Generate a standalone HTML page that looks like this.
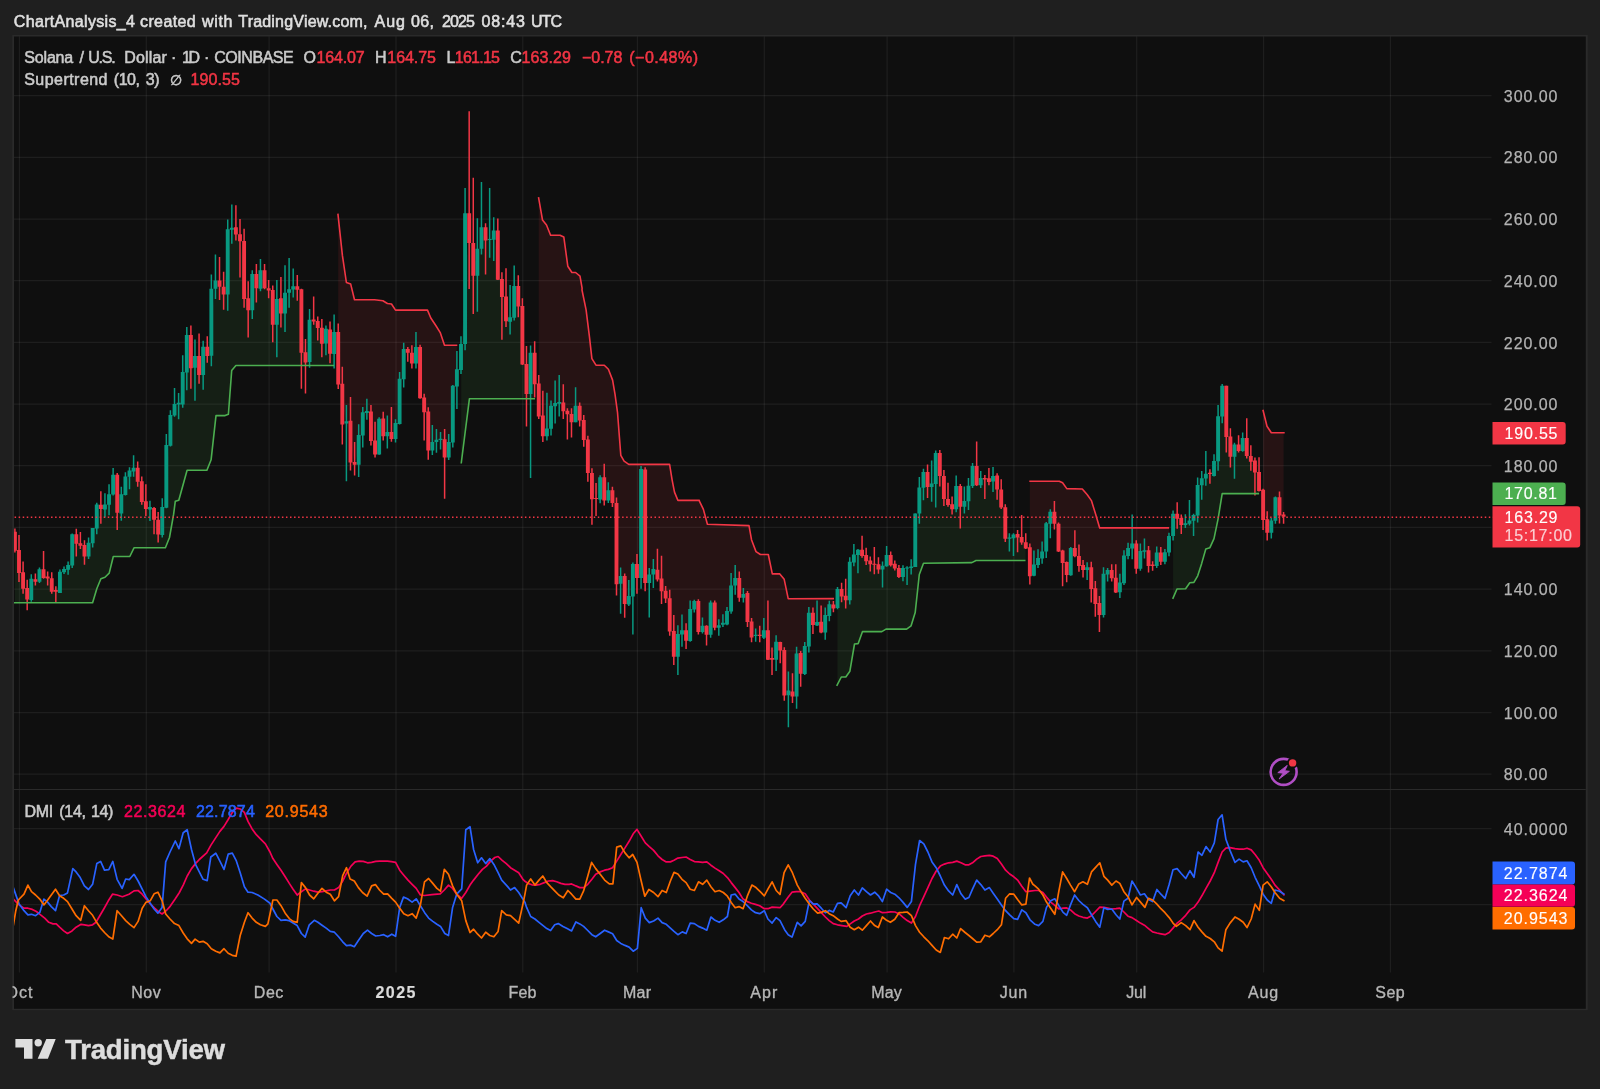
<!DOCTYPE html>
<html lang="en"><head><meta charset="utf-8"><title>SOLUSD chart</title>
<style>html,body{margin:0;padding:0;background:#1f1f1f;}body{width:1600px;height:1089px;overflow:hidden}svg{display:block}</style></head>
<body>
<svg width="1600" height="1089" viewBox="0 0 1600 1089" font-family='"Liberation Sans", sans-serif' font-size="16">
<defs><clipPath id="cp"><rect x="14" y="36.5" width="1477.5" height="936.0"/></clipPath><clipPath id="cpp"><rect x="14" y="36.5" width="1477.5" height="753.0"/></clipPath><clipPath id="cpd"><rect x="14" y="789.5" width="1477.5" height="183.0"/></clipPath><clipPath id="cpt"><rect x="12.6" y="972.5" width="1573.2" height="36.299999999999955"/></clipPath></defs>
<rect width="1600" height="1089" fill="#1f1f1f"/>
<rect x="12.3" y="35.0" width="1575.3999999999999" height="975.1999999999999" fill="#2a2a2a"/>
<rect x="14" y="36.5" width="1571.8" height="972.3" fill="#0f0f0f"/>
<path d="M19.4 36.5V972.5 M146.3 36.5V972.5 M269.1 36.5V972.5 M396.0 36.5V972.5 M522.8 36.5V972.5 M637.4 36.5V972.5 M764.3 36.5V972.5 M887.1 36.5V972.5 M1013.9 36.5V972.5 M1136.7 36.5V972.5 M1263.6 36.5V972.5 M1390.4 36.5V972.5" stroke="rgba(242,242,242,0.068)" stroke-width="1.25" fill="none"/>
<path d="M14 774.1H1491.5 M14 712.5H1491.5 M14 650.8H1491.5 M14 589.1H1491.5 M14 527.4H1491.5 M14 465.7H1491.5 M14 404.0H1491.5 M14 342.3H1491.5 M14 280.7H1491.5 M14 219.0H1491.5 M14 157.3H1491.5 M14 95.6H1491.5 M14 828.5H1491.5 M14 904.7H1491.5" stroke="rgba(242,242,242,0.068)" stroke-width="1.25" fill="none"/>
<path d="M14 789.5H1585.8" stroke="#2a2a2a" stroke-width="1.2" fill="none"/>
<g clip-path="url(#cpp)">
<polygon points="14.9,602.8 92.6,602.8 96.8,588.8 100.9,578.8 105.0,577.2 109.2,573.1 113.3,556.5 129.8,556.5 134.0,547.8 165.4,547.8 169.5,537.5 173.6,514.4 175.3,501.2 178.8,500.2 187.1,470.2 206.9,470.2 211.1,459.8 216.0,415.6 225.1,415.6 228.4,414.3 231.7,370.5 235.9,365.5 333.4,365.5 334.1,365.5 334.1,343.1 330.0,341.6 325.9,336.1 321.8,335.7 317.8,324.6 313.7,320.4 309.6,340.9 305.5,357.4 301.4,321.0 297.3,287.9 293.2,287.9 289.1,291.0 285.0,303.2 280.9,306.0 276.8,311.9 272.7,307.4 268.6,289.4 264.6,279.2 260.5,279.4 256.4,281.1 252.3,292.1 248.2,304.3 244.1,270.0 240.0,237.8 235.9,230.9 231.8,228.7 227.7,262.0 223.6,290.6 219.5,283.5 215.4,284.5 211.3,322.2 207.3,351.5 203.2,360.9 199.1,365.6 195.0,361.9 190.9,351.6 186.8,353.9 182.7,388.2 178.6,403.5 174.5,409.8 170.4,430.4 166.3,476.3 162.2,521.0 158.1,527.1 154.1,513.9 150.0,508.1 145.9,505.1 141.8,491.6 137.7,474.8 133.6,469.6 129.5,473.6 125.4,485.6 121.3,503.9 117.2,493.7 113.1,484.6 109.0,499.5 104.9,506.9 100.9,507.0 96.8,516.5 92.7,535.7 88.6,549.6 84.5,550.8 80.4,544.5 76.3,539.0 72.2,549.9 68.1,567.5 64.0,570.5 59.9,582.3 55.8,590.9 51.7,585.0 47.6,577.5 43.6,573.6 39.5,575.5 35.4,580.5 31.3,589.4 27.2,593.7 23.1,580.5 19.0,561.5 14.9,541.2" fill="rgba(76,175,80,0.10)"/>
<polygon points="338.2,216.6 342.4,255.4 346.4,282.5 350.7,284.1 354.5,299.8 374.6,299.8 382.9,300.7 387.4,303.5 391.5,304.0 395.5,310.1 427.5,310.1 430.8,318.0 435.8,325.5 440.4,332.9 444.5,345.3 456.9,345.3 456.9,378.0 452.8,414.2 448.7,449.9 444.6,448.4 440.5,439.5 436.4,440.9 432.3,446.2 428.2,431.0 424.2,404.8 420.1,372.5 416.0,355.2 411.9,358.1 407.8,350.9 403.7,364.1 399.6,401.4 395.5,431.0 391.4,435.5 387.3,434.1 383.2,427.4 379.1,436.6 375.0,447.4 371.0,426.2 366.9,412.1 362.8,423.9 358.7,449.9 354.6,463.4 350.5,441.6 346.4,422.4 342.3,404.1 338.2,358.2" fill="rgba(242,54,69,0.10)"/>
<polygon points="461.2,463.5 469.4,398.8 534.7,398.8 534.7,368.5 530.6,373.5 526.5,379.0 522.4,335.2 518.3,296.2 514.2,301.9 510.1,319.4 506.0,308.9 501.9,287.9 497.8,255.1 493.7,235.1 489.6,239.6 485.5,233.9 481.5,238.0 477.4,262.2 473.3,259.4 469.2,228.1 465.1,278.6 461.2,357.1" fill="rgba(76,175,80,0.10)"/>
<polygon points="538.7,198.6 542.5,220.0 546.5,225.0 550.6,235.2 560.0,235.2 563.8,236.9 567.8,266.2 571.9,272.5 575.6,272.5 580.0,276.2 582.1,288.1 582.0,290.0 586.1,309.8 589.4,336.3 591.9,358.6 596.0,365.2 604.3,365.2 608.4,369.3 612.6,380.1 615.0,394.1 617.5,412.3 620.8,455.3 624.1,461.1 628.8,464.4 669.6,464.4 672.1,479.8 674.5,492.1 677.9,500.4 699.3,500.4 699.4,501.2 703.4,509.4 707.4,524.3 749.0,525.6 751.5,539.7 756.0,551.6 760.4,554.5 768.3,554.5 772.3,573.9 779.8,573.9 784.2,579.3 788.2,598.7 833.4,598.6 833.4,606.5 829.3,610.1 825.2,623.7 821.1,627.0 817.0,623.7 812.9,619.0 808.9,629.7 804.8,660.0 800.7,663.4 796.6,674.9 792.5,693.9 788.4,692.9 784.3,672.8 780.2,646.4 776.1,650.8 772.0,658.8 767.9,645.0 763.8,634.0 759.7,635.4 755.7,635.4 751.6,629.5 747.5,607.5 743.4,595.8 739.3,587.8 735.2,581.8 731.1,598.6 727.0,617.7 722.9,623.8 718.8,626.5 714.7,615.2 710.6,618.7 706.5,630.2 702.4,628.8 698.4,616.5 694.3,605.3 690.2,625.0 686.1,635.5 682.0,632.3 677.9,645.4 673.8,643.9 669.7,614.8 665.6,594.6 661.5,584.9 657.4,574.7 653.3,571.8 649.2,578.8 645.2,526.3 641.1,523.5 637.0,571.0 632.9,580.2 628.8,600.2 624.7,589.9 620.6,579.8 616.5,543.5 612.4,496.5 608.3,495.3 604.2,488.9 600.1,488.5 596.0,498.5 592.0,486.2 587.9,456.4 583.8,430.1 579.7,413.1 575.6,413.9 571.5,418.1 567.4,412.5 563.3,406.8 559.2,402.9 555.1,404.5 551.0,417.2 546.9,432.4 542.8,426.0 538.7,399.9" fill="rgba(242,54,69,0.10)"/>
<polygon points="837.5,684.3 841.3,677.0 845.8,677.0 849.9,671.2 854.5,644.0 858.2,643.6 862.5,631.6 881.8,631.6 886.0,629.1 906.6,629.1 911.1,625.8 915.2,612.6 919.3,574.5 923.5,563.3 971.9,562.6 976.0,560.5 1025.5,560.5 1025.5,545.5 1021.7,539.8 1017.6,535.7 1013.5,536.3 1009.4,538.0 1005.3,523.0 1001.2,498.5 997.1,482.4 993.0,478.7 988.9,480.1 984.8,478.7 980.7,481.6 976.6,475.6 972.6,476.1 968.5,493.6 964.4,503.9 960.3,496.5 956.2,497.7 952.1,506.8 948.0,502.1 943.9,487.4 939.8,464.5 935.7,468.6 931.6,485.2 927.5,479.5 923.4,480.0 919.4,500.4 915.3,540.2 911.2,567.3 907.1,568.0 903.0,572.5 898.9,572.5 894.8,566.2 890.7,560.1 886.6,560.6 882.5,567.7 878.4,567.0 874.3,564.2 870.2,562.4 866.1,558.1 862.1,552.9 858.0,552.4 853.9,558.5 849.8,581.0 845.7,598.0 841.6,592.8 837.5,598.5" fill="rgba(76,175,80,0.10)"/>
<polygon points="1029.8,481.2 1059.3,481.2 1062.6,482.8 1066.8,488.6 1082.3,489.0 1087.3,494.8 1091.4,500.6 1095.5,513.8 1099.7,527.9 1169.0,527.9 1169.0,544.3 1164.9,557.0 1160.8,557.2 1156.7,559.2 1152.6,565.2 1148.5,558.0 1144.4,551.0 1140.3,559.9 1136.3,556.2 1132.2,546.0 1128.1,552.0 1124.0,569.4 1119.9,587.3 1115.8,585.2 1111.7,574.1 1107.6,572.2 1103.5,594.5 1099.4,609.1 1095.3,596.0 1091.2,578.1 1087.1,568.6 1083.0,567.5 1079.0,561.0 1074.9,552.1 1070.8,561.6 1066.7,568.5 1062.6,556.8 1058.5,537.6 1054.4,517.8 1050.3,517.8 1046.2,537.3 1042.1,555.0 1038.0,561.5 1033.9,570.2 1029.8,561.8" fill="rgba(242,54,69,0.10)"/>
<polygon points="1173.1,598.0 1177.0,589.0 1185.6,588.7 1189.8,582.7 1193.9,582.4 1197.7,575.8 1201.7,563.4 1205.8,549.0 1209.9,547.7 1214.0,538.6 1218.1,518.8 1222.2,493.6 1259.0,493.6 1259.0,481.5 1254.9,466.6 1250.8,458.9 1246.8,447.1 1242.7,444.6 1238.6,447.7 1234.5,450.6 1230.4,446.6 1226.3,411.3 1222.2,401.1 1218.1,438.8 1214.0,468.5 1209.9,473.4 1205.8,476.1 1201.7,481.8 1197.6,500.2 1193.5,517.9 1189.5,522.0 1185.4,524.1 1181.3,521.5 1177.2,516.3 1173.1,525.0" fill="rgba(76,175,80,0.10)"/>
<polygon points="1263.1,410.6 1267.0,426.2 1271.3,432.8 1283.6,432.8 1283.6,515.7 1279.5,506.4 1275.4,509.0 1271.3,526.6 1267.2,526.0 1263.1,505.0" fill="rgba(242,54,69,0.10)"/>
<path d="M31.28 574.2V601.7M39.46 567.6V583.0M59.93 569.4V592.9M64.02 566.4V573.9M68.11 561.5V574.7M72.20 533.4V568.1M88.57 537.5V559.0M92.67 528.1V547.4M96.76 502.8V534.2M104.94 493.2V517.4M109.04 484.3V515.2M113.13 468.1V495.4M121.31 486.8V520.7M125.41 472.2V495.4M129.50 467.3V489.3M133.59 455.2V476.7M149.96 500.8V521.0M162.24 498.2V537.5M166.33 434.1V508.2M170.42 410.2V446.5M174.52 387.9V416.8M178.61 393.1V419.3M182.70 355.2V407.7M186.79 326.9V390.3M194.98 339.6V400.7M203.16 340.7V389.8M211.35 274.6V366.2M215.44 254.5V299.1M227.72 219.4V310.7M231.81 204.5V243.7M252.27 270.2V318.9M260.46 259.1V291.2M276.83 280.1V357.3M285.01 265.2V331.9M289.11 258.1V307.7M293.20 268.5V297.4M309.57 309.0V367.7M325.94 325.5V355.3M334.12 314.4V368.6M346.40 405.1V481.2M358.68 424.2V476.9M362.77 406.9V447.4M366.86 398.7V419.7M379.14 417.2V454.8M387.33 415.5V448.6M395.51 419.2V442.6M399.60 372.1V424.5M403.70 342.8V387.4M415.97 332.1V368.4M432.34 425.1V455.1M436.44 428.9V452.8M440.53 432.0V449.4M448.71 434.1V460.0M452.81 385.0V447.4M456.90 351.1V408.9M460.99 336.2V373.9M465.08 188.1V350.2M477.36 218.2V311.7M481.45 182.1V254.5M489.64 188.1V257.7M493.73 217.2V261.1M510.10 285.0V334.5M514.19 265.5V320.5M530.56 345.4V478.1M546.93 392.8V440.4M551.02 400.4V435.5M555.12 380.4V423.6M559.21 375.1V416.4M575.58 387.2V422.2M600.13 475.3V503.2M608.32 482.2V502.9M620.60 567.5V613.7M628.78 580.0V606.0M632.88 562.4V634.4M641.06 465.9V588.7M649.25 568.0V617.4M653.34 559.1V588.0M677.89 625.3V674.9M681.99 614.5V646.8M690.17 600.5V641.8M694.26 599.7V612.6M702.45 617.5V633.6M710.63 600.5V637.7M718.82 619.2V635.7M722.91 614.2V626.9M727.00 607.1V625.3M731.10 572.9V613.7M735.19 565.0V594.7M743.37 588.1V602.6M755.65 628.6V641.8M763.84 617.9V639.0M776.11 635.2V671.1M788.39 671.6V727.3M796.58 646.8V708.8M804.76 641.9V675.1M808.85 607.0V652.4M817.04 600.6V626.0M825.22 607.6V639.8M829.32 600.7V621.2M837.50 586.9V609.3M849.78 557.2V604.6M853.87 544.0V566.3M857.96 548.9V573.2M882.52 561.5V587.6M886.61 546.0V566.7M902.98 565.3V581.2M907.07 566.3V584.9M911.17 559.2V574.5M915.26 513.4V567.0M919.35 477.0V523.7M923.44 468.8V500.2M931.63 460.5V501.8M935.72 450.6V507.6M956.18 475.4V512.2M964.37 486.4V513.4M968.46 477.9V510.1M972.55 463.0V488.1M980.74 470.9V488.1M993.02 467.1V491.9M1009.39 533.2V551.4M1013.48 533.2V555.9M1033.94 550.6V576.2M1038.03 549.3V567.9M1042.12 541.5V563.8M1046.22 522.1V558.0M1050.31 509.3V538.2M1070.77 546.9V575.8M1087.14 562.2V579.9M1103.51 567.2V617.4M1107.61 567.9V581.6M1119.88 573.8V598.1M1123.98 550.2V584.9M1128.07 542.7V559.3M1132.16 514.6V559.3M1140.35 543.6V570.8M1144.44 538.6V558.4M1156.72 546.4V567.9M1164.90 549.0V564.2M1168.99 532.8V556.3M1173.09 510.5V540.5M1185.36 514.2V527.9M1189.46 500.0V525.4M1193.55 513.8V536.1M1197.64 477.4V522.5M1201.73 471.0V499.8M1205.83 451.0V485.7M1214.01 454.3V476.6M1218.10 405.0V470.8M1222.20 384.0V423.2M1234.47 442.7V478.7M1242.66 432.5V451.8M1271.31 517.9V538.6M1275.40 496.4V523.7" stroke="#089981" stroke-width="1.5" fill="none"/>
<path d="M29.33 578.8h3.9V600.0h-3.9zM37.51 569.3h3.9V581.8h-3.9zM57.98 571.7h3.9V592.9h-3.9zM62.07 568.9h3.9V572.2h-3.9zM66.16 565.1h3.9V569.8h-3.9zM70.25 534.2h3.9V565.6h-3.9zM86.62 542.8h3.9V556.5h-3.9zM90.72 528.1h3.9V543.3h-3.9zM94.81 504.5h3.9V528.4h-3.9zM102.99 504.5h3.9V509.4h-3.9zM107.09 494.2h3.9V504.8h-3.9zM111.18 474.7h3.9V494.5h-3.9zM119.36 494.2h3.9V513.6h-3.9zM123.45 476.4h3.9V494.9h-3.9zM127.55 470.6h3.9V476.7h-3.9zM131.64 467.8h3.9V471.4h-3.9zM148.01 506.9h3.9V509.4h-3.9zM160.29 506.9h3.9V535.0h-3.9zM164.38 444.9h3.9V507.7h-3.9zM168.47 415.1h3.9V445.7h-3.9zM172.57 404.0h3.9V415.6h-3.9zM176.66 402.7h3.9V404.4h-3.9zM180.75 372.1h3.9V404.4h-3.9zM184.84 335.1h3.9V372.6h-3.9zM193.03 356.1h3.9V367.7h-3.9zM201.21 346.8h3.9V375.0h-3.9zM209.40 288.7h3.9V355.7h-3.9zM213.49 280.4h3.9V288.7h-3.9zM225.77 229.3h3.9V294.6h-3.9zM229.86 227.7h3.9V229.7h-3.9zM250.32 274.0h3.9V310.3h-3.9zM258.51 270.2h3.9V288.7h-3.9zM274.88 299.1h3.9V324.7h-3.9zM283.06 292.8h3.9V313.6h-3.9zM287.16 289.2h3.9V292.8h-3.9zM291.25 286.2h3.9V289.5h-3.9zM307.62 319.8h3.9V361.9h-3.9zM323.99 328.8h3.9V343.4h-3.9zM332.17 332.1h3.9V354.0h-3.9zM344.45 421.2h3.9V423.5h-3.9zM356.73 435.0h3.9V464.8h-3.9zM360.82 412.2h3.9V435.5h-3.9zM364.91 411.1h3.9V413.1h-3.9zM377.19 418.8h3.9V454.4h-3.9zM385.38 432.1h3.9V436.2h-3.9zM393.56 423.1h3.9V438.9h-3.9zM397.65 378.8h3.9V424.0h-3.9zM401.75 349.1h3.9V379.2h-3.9zM414.02 346.9h3.9V363.5h-3.9zM430.39 441.9h3.9V450.6h-3.9zM434.49 439.8h3.9V441.9h-3.9zM438.58 438.8h3.9V440.1h-3.9zM446.76 442.1h3.9V457.6h-3.9zM450.86 385.8h3.9V442.6h-3.9zM454.95 369.3h3.9V386.6h-3.9zM459.04 344.1h3.9V370.1h-3.9zM463.13 213.2h3.9V344.1h-3.9zM475.41 248.7h3.9V275.7h-3.9zM479.50 227.3h3.9V248.7h-3.9zM487.69 239.0h3.9V240.1h-3.9zM491.78 230.4h3.9V239.7h-3.9zM508.15 317.2h3.9V321.7h-3.9zM512.24 286.0h3.9V317.7h-3.9zM528.61 352.8h3.9V394.1h-3.9zM544.98 428.5h3.9V436.3h-3.9zM549.07 405.7h3.9V428.8h-3.9zM553.17 402.9h3.9V406.2h-3.9zM557.26 402.1h3.9V403.7h-3.9zM573.63 405.7h3.9V422.2h-3.9zM598.18 477.3h3.9V499.6h-3.9zM606.37 490.2h3.9V500.4h-3.9zM618.65 575.9h3.9V583.7h-3.9zM626.83 596.0h3.9V604.5h-3.9zM630.92 564.0h3.9V596.5h-3.9zM639.11 469.0h3.9V578.0h-3.9zM647.29 574.6h3.9V583.0h-3.9zM651.39 569.0h3.9V574.6h-3.9zM675.94 634.0h3.9V656.7h-3.9zM680.03 630.2h3.9V634.4h-3.9zM688.22 609.1h3.9V641.0h-3.9zM692.31 601.0h3.9V609.6h-3.9zM700.50 625.8h3.9V631.9h-3.9zM708.68 602.6h3.9V634.7h-3.9zM716.87 625.3h3.9V627.8h-3.9zM720.96 622.8h3.9V624.8h-3.9zM725.05 610.9h3.9V624.5h-3.9zM729.14 585.6h3.9V611.6h-3.9zM733.24 577.9h3.9V585.6h-3.9zM741.42 593.9h3.9V597.7h-3.9zM753.70 634.7h3.9V636.0h-3.9zM761.88 630.2h3.9V637.7h-3.9zM774.16 641.8h3.9V659.7h-3.9zM786.44 690.6h3.9V695.2h-3.9zM794.62 653.4h3.9V696.4h-3.9zM802.81 646.0h3.9V674.0h-3.9zM806.90 612.8h3.9V646.6h-3.9zM815.09 621.9h3.9V625.5h-3.9zM823.27 615.0h3.9V632.4h-3.9zM827.37 604.3h3.9V615.9h-3.9zM835.55 589.1h3.9V607.9h-3.9zM847.83 561.7h3.9V600.2h-3.9zM851.92 554.4h3.9V562.6h-3.9zM856.01 549.8h3.9V555.0h-3.9zM880.57 565.8h3.9V569.6h-3.9zM884.66 555.0h3.9V566.3h-3.9zM901.03 568.1h3.9V577.0h-3.9zM905.12 567.4h3.9V568.6h-3.9zM909.22 566.5h3.9V568.1h-3.9zM913.31 513.4h3.9V567.0h-3.9zM917.40 487.4h3.9V513.4h-3.9zM921.49 472.1h3.9V487.8h-3.9zM929.68 483.6h3.9V486.9h-3.9zM933.77 453.1h3.9V484.1h-3.9zM954.23 486.1h3.9V509.3h-3.9zM962.42 501.0h3.9V506.8h-3.9zM966.51 485.8h3.9V501.3h-3.9zM970.60 466.0h3.9V486.1h-3.9zM978.79 477.9h3.9V485.3h-3.9zM991.07 475.9h3.9V481.5h-3.9zM1007.44 537.4h3.9V538.7h-3.9zM1011.53 534.4h3.9V538.2h-3.9zM1031.99 564.6h3.9V575.7h-3.9zM1036.08 558.0h3.9V565.1h-3.9zM1040.17 551.4h3.9V558.5h-3.9zM1044.27 523.3h3.9V551.4h-3.9zM1048.36 511.7h3.9V523.8h-3.9zM1068.82 548.0h3.9V575.2h-3.9zM1085.19 567.2h3.9V570.0h-3.9zM1101.56 573.8h3.9V615.1h-3.9zM1105.65 570.0h3.9V574.5h-3.9zM1117.93 582.4h3.9V592.3h-3.9zM1122.03 555.6h3.9V583.2h-3.9zM1126.12 548.0h3.9V556.0h-3.9zM1130.21 543.6h3.9V548.5h-3.9zM1138.39 551.0h3.9V568.8h-3.9zM1142.49 550.2h3.9V551.8h-3.9zM1154.77 552.6h3.9V565.9h-3.9zM1162.95 552.3h3.9V561.7h-3.9zM1167.04 536.0h3.9V552.6h-3.9zM1171.13 513.8h3.9V536.1h-3.9zM1183.41 523.3h3.9V525.0h-3.9zM1187.51 520.4h3.9V523.7h-3.9zM1191.60 515.0h3.9V520.8h-3.9zM1195.69 484.9h3.9V515.5h-3.9zM1199.78 478.3h3.9V485.2h-3.9zM1203.88 473.7h3.9V478.6h-3.9zM1212.06 460.9h3.9V476.1h-3.9zM1216.15 416.3h3.9V461.2h-3.9zM1220.25 385.7h3.9V416.6h-3.9zM1232.52 444.4h3.9V456.8h-3.9zM1240.71 438.1h3.9V451.0h-3.9zM1269.36 520.4h3.9V532.8h-3.9zM1273.45 497.3h3.9V520.7h-3.9z" fill="#089981"/>
<path d="M14.91 528.4V552.4M19.00 535.0V582.1M23.09 561.5V593.7M27.19 579.7V610.2M35.37 573.6V585.5M43.55 551.1V578.8M47.65 571.4V585.5M51.74 572.2V593.7M55.83 586.3V602.8M76.30 528.8V556.5M80.39 532.1V549.1M84.48 540.3V564.8M100.85 491.2V523.8M117.22 473.1V530.1M137.68 461.5V486.8M141.78 476.4V504.8M145.87 484.3V516.0M154.05 506.9V534.2M158.15 511.9V542.5M190.89 325.5V388.7M199.07 333.5V383.7M207.26 336.3V362.7M219.53 256.9V299.9M223.62 271.8V309.8M235.90 205.2V240.4M240.00 218.9V277.6M244.09 228.8V307.7M248.18 281.2V337.5M256.37 264.0V302.4M264.55 264.0V289.2M268.64 280.1V298.3M272.74 285.5V342.2M280.92 277.1V327.5M297.29 275.1V300.7M301.38 288.7V388.7M305.48 339.0V393.6M313.66 296.6V324.7M317.75 316.4V340.4M321.85 318.9V357.3M330.03 321.4V363.3M338.22 323.5V389.1M342.31 366.8V444.4M350.49 397.0V470.6M354.59 441.9V475.6M370.96 405.1V445.5M375.05 421.8V457.6M383.23 411.7V440.5M391.42 406.9V441.8M407.79 346.9V361.8M411.88 345.3V368.4M420.06 344.8V398.7M424.16 393.7V440.5M428.25 407.3V459.8M444.62 428.9V498.8M469.18 111.2V289.0M473.27 177.7V313.9M485.55 223.2V274.4M497.82 218.6V280.1M501.92 272.3V339.8M506.01 268.3V327.1M518.29 275.2V317.2M522.38 298.2V365.1M526.47 346.1V426.4M534.66 341.2V397.4M538.75 375.1V418.9M542.84 390.8V442.1M563.30 384.2V418.9M567.39 408.2V439.6M571.49 408.2V437.6M579.67 402.4V426.4M583.76 415.1V446.7M587.86 435.8V481.7M591.95 468.2V524.7M596.04 483.1V516.1M604.23 463.8V505.4M612.41 486.7V507.0M616.50 497.6V595.5M624.69 573.6V617.8M636.97 554.1V593.7M645.15 467.3V591.3M657.43 548.8V581.5M661.52 555.8V604.1M665.62 586.0V603.1M669.71 589.8V635.7M673.80 614.9V665.0M686.08 623.3V648.9M698.36 599.3V634.4M706.54 625.3V645.6M714.73 600.5V630.2M739.28 571.6V601.7M747.47 591.1V626.9M751.56 617.9V642.3M759.74 625.8V642.3M767.93 600.5V660.0M772.02 647.6V674.9M780.21 641.8V663.3M784.30 647.3V700.8M792.48 673.2V703.0M800.67 650.9V686.8M812.95 607.5V634.0M821.13 605.6V633.2M833.41 601.0V612.2M841.59 582.8V602.3M845.69 578.7V608.4M862.06 535.7V557.7M866.15 547.8V565.0M870.24 556.4V571.6M874.33 546.9V574.2M878.43 557.2V573.7M890.70 551.4V566.5M894.80 560.4V570.4M898.89 565.0V577.9M927.54 464.6V498.0M939.81 450.1V486.4M943.91 469.9V506.0M948.00 482.8V506.8M952.09 496.4V514.5M960.28 484.1V528.5M976.65 441.5V486.1M984.83 474.9V499.0M988.92 467.9V485.3M997.11 473.2V499.7M1001.20 479.2V508.9M1005.29 504.3V542.0M1017.57 529.9V552.2M1021.66 515.0V544.8M1025.76 533.2V548.9M1029.85 543.6V584.5M1054.40 501.0V529.4M1058.50 522.5V551.9M1062.59 549.8V586.3M1066.68 561.5V582.2M1074.87 530.3V557.2M1078.96 544.4V571.7M1083.05 560.1V577.4M1091.24 561.7V602.6M1095.33 581.1V616.8M1099.42 596.0V632.0M1111.70 564.2V581.6M1115.79 564.2V593.1M1136.25 540.2V573.8M1148.53 546.0V572.5M1152.62 561.2V570.8M1160.81 546.9V565.0M1177.18 502.2V528.7M1181.27 514.6V534.0M1209.92 469.2V483.8M1226.29 385.7V452.6M1230.38 428.2V467.5M1238.57 435.3V452.6M1246.75 418.3V458.4M1250.84 445.2V470.8M1254.94 457.6V495.6M1259.03 457.3V491.5M1263.12 488.7V530.0M1267.21 511.3V540.6M1279.49 491.5V523.4M1283.58 512.1V523.7" stroke="#f23645" stroke-width="1.5" fill="none"/>
<path d="M12.96 531.7h3.9V550.7h-3.9zM17.05 549.9h3.9V573.1h-3.9zM21.14 572.2h3.9V588.8h-3.9zM25.24 587.9h3.9V599.5h-3.9zM33.42 579.3h3.9V581.7h-3.9zM41.60 569.3h3.9V578.0h-3.9zM45.70 576.4h3.9V578.5h-3.9zM49.79 578.2h3.9V591.7h-3.9zM53.88 590.1h3.9V591.7h-3.9zM74.34 534.2h3.9V543.8h-3.9zM78.44 543.3h3.9V545.8h-3.9zM82.53 545.0h3.9V556.5h-3.9zM98.90 504.8h3.9V509.1h-3.9zM115.27 474.7h3.9V512.7h-3.9zM135.73 467.8h3.9V481.7h-3.9zM139.83 481.3h3.9V502.0h-3.9zM143.92 501.2h3.9V509.1h-3.9zM152.10 508.1h3.9V519.7h-3.9zM156.20 519.7h3.9V534.5h-3.9zM188.94 335.1h3.9V368.2h-3.9zM197.12 356.1h3.9V375.0h-3.9zM205.31 346.8h3.9V356.1h-3.9zM217.58 280.4h3.9V286.7h-3.9zM221.68 286.7h3.9V294.6h-3.9zM233.95 227.2h3.9V234.6h-3.9zM238.05 234.3h3.9V241.2h-3.9zM242.14 240.9h3.9V299.1h-3.9zM246.23 298.3h3.9V310.3h-3.9zM254.42 274.0h3.9V288.3h-3.9zM262.60 270.2h3.9V288.3h-3.9zM266.69 288.3h3.9V290.5h-3.9zM270.79 290.0h3.9V324.7h-3.9zM278.97 298.3h3.9V313.6h-3.9zM295.34 286.2h3.9V289.7h-3.9zM299.43 289.2h3.9V352.8h-3.9zM303.53 352.3h3.9V362.4h-3.9zM311.71 319.4h3.9V321.4h-3.9zM315.80 321.1h3.9V328.0h-3.9zM319.90 327.7h3.9V343.7h-3.9zM328.08 329.5h3.9V353.7h-3.9zM336.27 332.0h3.9V384.4h-3.9zM340.36 383.8h3.9V424.5h-3.9zM348.54 420.8h3.9V462.5h-3.9zM352.64 461.9h3.9V464.8h-3.9zM369.01 411.4h3.9V441.1h-3.9zM373.10 440.5h3.9V454.4h-3.9zM381.28 418.5h3.9V436.2h-3.9zM389.47 432.1h3.9V438.9h-3.9zM405.84 349.1h3.9V352.7h-3.9zM409.93 352.7h3.9V363.5h-3.9zM418.12 346.9h3.9V398.2h-3.9zM422.21 397.4h3.9V412.2h-3.9zM426.30 411.4h3.9V450.6h-3.9zM442.67 439.2h3.9V457.6h-3.9zM467.23 213.2h3.9V243.1h-3.9zM471.32 243.1h3.9V275.7h-3.9zM483.60 227.3h3.9V240.6h-3.9zM495.87 230.4h3.9V279.8h-3.9zM499.97 278.9h3.9V297.0h-3.9zM504.06 296.5h3.9V321.3h-3.9zM516.34 286.0h3.9V306.5h-3.9zM520.43 305.9h3.9V364.5h-3.9zM524.52 363.9h3.9V394.1h-3.9zM532.71 352.8h3.9V384.2h-3.9zM536.80 383.4h3.9V416.4h-3.9zM540.89 415.6h3.9V436.3h-3.9zM561.35 402.4h3.9V411.2h-3.9zM565.44 410.7h3.9V414.3h-3.9zM569.54 414.0h3.9V422.2h-3.9zM577.72 405.7h3.9V420.6h-3.9zM581.81 420.1h3.9V440.1h-3.9zM585.91 439.6h3.9V473.1h-3.9zM590.00 473.1h3.9V499.3h-3.9zM594.09 497.9h3.9V499.1h-3.9zM602.28 477.3h3.9V500.4h-3.9zM610.46 490.2h3.9V502.9h-3.9zM614.55 502.9h3.9V584.2h-3.9zM622.74 575.9h3.9V603.9h-3.9zM635.02 564.0h3.9V578.0h-3.9zM643.20 469.5h3.9V583.1h-3.9zM655.48 569.8h3.9V579.6h-3.9zM659.57 578.5h3.9V591.3h-3.9zM663.66 590.7h3.9V598.5h-3.9zM667.76 598.3h3.9V631.4h-3.9zM671.85 631.1h3.9V656.7h-3.9zM684.13 630.2h3.9V640.7h-3.9zM696.40 601.0h3.9V631.9h-3.9zM704.59 625.8h3.9V634.7h-3.9zM712.77 602.6h3.9V627.8h-3.9zM737.33 577.9h3.9V597.7h-3.9zM745.51 593.1h3.9V622.0h-3.9zM749.61 621.5h3.9V637.4h-3.9zM757.79 634.7h3.9V636.0h-3.9zM765.98 630.2h3.9V659.7h-3.9zM770.07 657.9h3.9V659.7h-3.9zM778.25 642.1h3.9V650.6h-3.9zM782.35 650.1h3.9V695.5h-3.9zM790.53 691.4h3.9V696.4h-3.9zM798.72 653.1h3.9V673.7h-3.9zM811.00 612.8h3.9V625.1h-3.9zM819.18 621.7h3.9V632.4h-3.9zM831.46 604.6h3.9V608.4h-3.9zM839.64 589.1h3.9V596.4h-3.9zM843.74 595.7h3.9V600.2h-3.9zM860.11 549.8h3.9V556.0h-3.9zM864.20 555.0h3.9V561.3h-3.9zM868.29 560.5h3.9V564.3h-3.9zM872.38 563.7h3.9V564.7h-3.9zM876.48 564.3h3.9V569.6h-3.9zM888.75 555.0h3.9V565.3h-3.9zM892.85 563.8h3.9V568.6h-3.9zM896.94 567.9h3.9V577.0h-3.9zM925.59 472.1h3.9V486.9h-3.9zM937.86 453.1h3.9V475.9h-3.9zM941.96 475.9h3.9V499.0h-3.9zM946.05 499.0h3.9V505.1h-3.9zM950.14 504.3h3.9V509.3h-3.9zM958.33 486.1h3.9V506.8h-3.9zM974.70 466.0h3.9V485.3h-3.9zM982.88 477.9h3.9V479.5h-3.9zM986.97 478.2h3.9V482.0h-3.9zM995.16 475.4h3.9V489.4h-3.9zM999.25 489.4h3.9V507.6h-3.9zM1003.34 507.3h3.9V538.7h-3.9zM1015.62 534.0h3.9V537.4h-3.9zM1019.71 537.0h3.9V542.6h-3.9zM1023.81 542.3h3.9V548.6h-3.9zM1027.90 547.3h3.9V576.2h-3.9zM1052.45 511.7h3.9V523.8h-3.9zM1056.55 523.8h3.9V551.4h-3.9zM1060.64 550.5h3.9V563.0h-3.9zM1064.73 562.0h3.9V575.0h-3.9zM1072.91 548.0h3.9V556.3h-3.9zM1077.01 556.0h3.9V565.9h-3.9zM1081.10 565.0h3.9V570.0h-3.9zM1089.29 567.2h3.9V589.0h-3.9zM1093.38 588.2h3.9V603.9h-3.9zM1097.47 603.1h3.9V615.1h-3.9zM1109.75 570.0h3.9V578.3h-3.9zM1113.84 577.8h3.9V592.6h-3.9zM1134.30 543.6h3.9V568.8h-3.9zM1146.58 550.2h3.9V565.9h-3.9zM1150.67 564.5h3.9V565.9h-3.9zM1158.86 552.6h3.9V561.7h-3.9zM1175.23 513.8h3.9V518.8h-3.9zM1179.32 517.9h3.9V525.0h-3.9zM1207.97 472.8h3.9V473.9h-3.9zM1224.34 385.7h3.9V436.9h-3.9zM1228.43 436.4h3.9V456.8h-3.9zM1236.62 444.4h3.9V451.0h-3.9zM1244.80 438.1h3.9V456.0h-3.9zM1248.89 456.0h3.9V461.7h-3.9zM1252.99 460.6h3.9V472.5h-3.9zM1257.08 472.1h3.9V490.9h-3.9zM1261.17 489.8h3.9V520.1h-3.9zM1265.26 519.3h3.9V532.8h-3.9zM1277.54 497.3h3.9V515.5h-3.9zM1281.63 514.6h3.9V516.8h-3.9z" fill="#f23645"/>
<polyline points="10.5,602.8 92.6,602.8 96.8,588.8 100.9,578.8 105.0,577.2 109.2,573.1 113.3,556.5 129.8,556.5 134.0,547.8 165.4,547.8 169.5,537.5 173.6,514.4 175.3,501.2 178.8,500.2 187.1,470.2 206.9,470.2 211.1,459.8 216.0,415.6 225.1,415.6 228.4,414.3 231.7,370.5 235.9,365.5 333.4,365.5 334.1,365.5" fill="none" stroke="#4caf50" stroke-width="1.6" stroke-linejoin="round"/>
<polyline points="337.9,213.7 342.4,255.4 346.4,282.5 350.7,284.1 354.5,299.8 374.6,299.8 382.9,300.7 387.4,303.5 391.5,304.0 395.5,310.1 427.5,310.1 430.8,318.0 435.8,325.5 440.4,332.9 444.5,345.3 457.3,345.3" fill="none" stroke="#f23645" stroke-width="1.6" stroke-linejoin="round"/>
<polyline points="461.2,463.5 469.4,398.8 535,398.8" fill="none" stroke="#4caf50" stroke-width="1.6" stroke-linejoin="round"/>
<polyline points="538.5,197.2 542.5,220.0 546.5,225.0 550.6,235.2 560.0,235.2 563.8,236.9 567.8,266.2 571.9,272.5 575.6,272.5 580.0,276.2 582.1,288.1 582.0,290.0 586.1,309.8 589.4,336.3 591.9,358.6 596.0,365.2 604.3,365.2 608.4,369.3 612.6,380.1 615.0,394.1 617.5,412.3 620.8,455.3 624.1,461.1 628.8,464.4 669.6,464.4 672.1,479.8 674.5,492.1 677.9,500.4 699.3,500.4 699.4,501.2 703.4,509.4 707.4,524.3 749.0,525.6 751.5,539.7 756.0,551.6 760.4,554.5 768.3,554.5 772.3,573.9 779.8,573.9 784.2,579.3 788.2,598.7 834,598.6" fill="none" stroke="#f23645" stroke-width="1.6" stroke-linejoin="round"/>
<polyline points="836.7,685.8 841.3,677.0 845.8,677.0 849.9,671.2 854.5,644.0 858.2,643.6 862.5,631.6 881.8,631.6 886.0,629.1 906.6,629.1 911.1,625.8 915.2,612.6 919.3,574.5 923.5,563.3 971.9,562.6 976.0,560.5 1025.5,560.5" fill="none" stroke="#4caf50" stroke-width="1.6" stroke-linejoin="round"/>
<polyline points="1029.3,481.2 1059.3,481.2 1062.6,482.8 1066.8,488.6 1082.3,489.0 1087.3,494.8 1091.4,500.6 1095.5,513.8 1099.7,527.9 1169.1,527.9" fill="none" stroke="#f23645" stroke-width="1.6" stroke-linejoin="round"/>
<polyline points="1172.7,598.9 1177.0,589.0 1185.6,588.7 1189.8,582.7 1193.9,582.4 1197.7,575.8 1201.7,563.4 1205.8,549.0 1209.9,547.7 1214.0,538.6 1218.1,518.8 1222.2,493.6 1259.1,493.6" fill="none" stroke="#4caf50" stroke-width="1.6" stroke-linejoin="round"/>
<polyline points="1262.9,409.7 1267.0,426.2 1271.3,432.8 1284.7,432.8" fill="none" stroke="#f23645" stroke-width="1.6" stroke-linejoin="round"/>
</g>
<path d="M14.6 517.2H1493" stroke="#f23645" stroke-width="1.45" stroke-dasharray="1.5 2.55" fill="none"/>
<g clip-path="url(#cpd)">
<polyline points="13.3,899.1 19.1,904.9 24.0,908.2 27.9,908.2 32.3,909.4 36.4,911.5 40.6,914.8 44.7,918.1 48.8,922.3 53.0,923.9 56.3,923.9 59.6,927.2 63.7,930.9 67.5,933.5 72.0,930.9 76.1,927.2 81.1,924.3 84.4,924.8 88.5,925.6 92.6,924.8 96.0,922.3 100.1,915.3 104.2,908.2 108.3,900.8 112.5,894.2 117.1,895.0 122.4,896.7 129.0,894.2 134.0,890.9 138.1,890.5 142.2,894.2 145.9,898.8 150.5,904.1 154.6,908.2 158.8,912.0 162.1,914.0 166.2,910.7 170.3,906.1 175.3,898.8 179.4,892.5 183.2,885.1 187.2,876.0 191.5,868.6 195.5,863.6 199.3,859.5 206.7,852.9 210.8,845.4 215.8,837.6 219.9,831.4 224.0,826.4 228.2,819.5 232.3,812.4 236.4,808.2 240.2,809.0 244.4,812.4 248.0,821.4 252.1,828.9 256.3,834.7 260.4,838.8 265.4,843.8 270.0,852.0 272.9,858.6 276.9,864.4 281.0,870.2 285.2,876.8 289.3,883.4 293.1,889.2 297.2,895.0 301.4,891.7 305.5,888.9 309.6,890.0 313.8,891.2 317.9,892.2 322.0,891.7 326.2,890.9 330.3,890.0 334.4,890.0 338.6,887.6 342.7,881.0 346.8,872.7 351.0,866.1 355.1,861.9 359.2,861.1 363.3,861.4 367.5,862.8 371.6,862.4 375.7,861.4 379.9,861.1 387.3,861.1 391.4,861.6 395.6,862.4 399.7,870.2 403.8,875.2 408.0,880.1 412.1,884.3 416.2,888.4 420.4,895.0 424.5,895.5 431.9,894.7 440.2,893.8 444.3,890.0 448.5,885.1 452.6,888.4 456.7,894.2 461.7,898.3 465.8,892.5 470.0,885.1 473.6,880.1 478.2,874.3 482.4,869.4 486.5,866.1 490.6,861.1 494.8,857.5 498.1,856.5 502.2,860.3 506.3,863.6 510.5,867.7 514.6,870.2 518.7,872.7 522.9,879.3 525.0,881.3 527.9,883.4 531.9,884.8 536.0,885.1 540.2,884.3 544.3,882.6 548.4,881.0 552.6,880.6 556.7,881.8 560.8,883.4 565.0,884.3 569.1,884.3 571.6,883.9 575.9,885.9 579.8,887.6 583.6,887.6 587.8,884.3 591.9,879.3 595.7,874.3 600.2,871.9 604.6,870.2 608.4,869.4 612.6,867.7 616.7,861.1 620.8,854.5 625.0,847.9 629.1,841.3 633.2,833.8 637.0,829.4 641.2,836.3 645.3,842.9 649.3,846.6 653.6,850.4 658.0,855.8 662.1,859.5 666.3,861.9 670.4,861.9 674.0,860.3 677.9,858.1 682.0,857.5 686.1,857.0 690.2,859.5 694.4,861.6 698.5,861.9 702.6,862.4 706.8,861.9 710.9,865.2 715.0,868.1 719.2,870.7 723.3,873.5 727.4,877.6 731.2,882.6 735.2,887.6 739.0,892.5 743.1,899.1 747.3,901.6 751.4,903.3 755.5,904.4 759.7,905.7 764.3,908.7 767.9,908.7 772.1,907.1 776.2,907.4 780.0,907.7 783.3,904.1 787.9,897.5 792.0,892.2 796.2,891.7 800.6,891.7 805.2,893.8 809.4,900.0 813.3,904.1 817.1,908.2 821.3,912.7 825.4,917.0 829.2,920.6 833.2,923.6 837.5,924.8 841.9,925.6 846.9,926.4 850.2,923.9 854.3,921.0 858.5,919.0 862.3,916.0 866.4,914.0 870.5,913.2 874.7,912.0 878.8,911.0 882.4,912.7 886.6,912.4 890.7,911.9 894.8,912.0 899.0,913.7 903.1,917.3 907.2,920.6 911.4,923.1 915.5,916.5 919.6,905.7 923.8,896.7 927.9,887.6 932.0,878.5 936.2,871.0 940.3,866.1 944.4,864.1 948.6,862.8 952.7,862.4 956.8,861.1 961.0,862.8 965.1,864.8 968.9,864.8 972.5,862.8 976.7,859.1 980.8,856.5 984.9,855.8 989.4,855.3 993.2,856.2 997.3,858.6 1001.4,864.1 1005.6,870.2 1009.7,874.0 1013.8,876.8 1017.6,880.1 1021.8,886.2 1025.9,891.7 1030.0,891.2 1035.0,890.5 1038.6,890.5 1042.9,892.5 1046.5,897.1 1050.7,902.1 1054.8,905.4 1058.9,909.0 1063.1,908.2 1066.7,907.9 1070.5,909.9 1074.6,913.7 1078.8,916.0 1082.9,917.3 1087.4,918.1 1091.5,915.7 1095.6,911.5 1099.8,907.1 1103.9,907.4 1107.7,908.2 1111.8,909.0 1116.0,908.7 1119.8,908.2 1123.9,912.0 1128.0,916.2 1132.0,917.6 1136.1,920.3 1140.4,923.1 1144.4,925.2 1148.5,928.6 1152.6,931.9 1156.9,933.0 1160.9,933.8 1165.0,934.7 1169.2,932.5 1173.0,928.1 1177.1,923.1 1181.2,919.8 1185.7,915.3 1190.0,909.9 1194.0,907.4 1198.1,902.1 1201.9,895.8 1206.0,888.4 1210.2,881.0 1214.3,872.7 1218.1,862.4 1222.1,852.0 1225.9,848.2 1230.0,847.6 1235.0,848.7 1239.1,849.2 1243.2,849.2 1247.0,848.2 1251.2,849.9 1255.1,854.5 1259.3,860.3 1263.1,867.7 1267.2,873.5 1271.3,879.3 1275.0,885.1 1279.6,890.0 1284.5,895.5" fill="none" stroke="#f50057" stroke-width="1.7" stroke-linejoin="round"/>
<polyline points="13.3,887.6 19.1,904.1 24.0,910.7 27.9,914.8 31.5,914.3 35.6,915.7 39.8,912.4 43.9,899.1 47.2,901.6 51.3,906.6 55.5,910.7 59.6,895.5 63.7,895.0 67.5,892.9 72.8,868.6 76.1,871.9 80.2,877.6 84.4,885.9 88.5,889.5 92.6,884.3 96.8,863.6 100.6,861.4 104.5,870.2 108.8,869.7 112.8,861.4 117.1,879.3 122.1,888.4 125.7,879.0 129.3,879.6 134.0,874.3 138.1,881.0 142.2,889.2 145.9,896.7 150.2,903.3 154.1,909.0 157.9,913.2 162.1,907.4 165.7,861.9 170.0,852.0 175.3,841.0 178.9,848.7 183.2,832.7 187.2,829.7 191.5,849.5 195.5,864.4 199.3,871.9 203.1,879.3 207.2,880.6 210.8,857.0 215.8,853.2 219.9,861.1 224.0,869.4 228.2,854.2 232.3,853.2 236.1,860.3 240.2,872.7 244.4,886.7 248.0,892.2 252.1,892.5 257.9,895.0 264.5,899.1 270.0,903.3 272.9,909.0 276.9,916.5 281.0,920.3 285.2,919.8 289.0,920.6 293.1,923.1 297.2,925.6 301.4,933.5 305.2,937.1 309.3,924.8 314.3,920.3 317.9,922.3 322.0,925.2 326.2,928.1 330.3,931.4 334.4,932.2 338.6,936.8 342.7,941.8 346.5,945.7 350.6,945.1 354.3,946.7 358.4,940.5 363.3,933.5 367.5,930.2 371.6,933.5 375.7,936.0 379.9,935.5 383.7,934.7 387.6,936.8 391.8,934.2 395.6,936.3 399.7,907.4 403.5,897.1 407.5,898.8 412.1,902.1 416.2,898.8 420.4,905.7 424.5,912.4 428.6,918.1 432.8,921.4 436.9,924.3 440.5,926.4 444.8,933.5 448.5,935.5 452.6,907.4 456.7,894.2 461.7,888.9 465.8,829.7 470.0,826.7 473.6,849.5 477.7,862.8 481.5,857.8 485.7,863.6 489.8,858.6 493.9,864.4 498.1,872.7 501.7,880.1 506.3,885.1 510.5,890.0 514.6,887.6 518.7,892.5 522.9,899.1 525.0,902.4 526.6,907.4 530.7,916.5 534.9,919.0 539.0,922.3 543.1,925.6 546.8,928.6 550.6,930.5 554.7,924.8 558.3,923.6 563.0,926.4 567.1,928.6 571.6,930.9 575.9,921.9 579.8,923.9 583.6,926.4 587.8,930.5 591.9,934.7 595.7,936.8 600.2,933.5 604.6,930.2 608.4,931.9 612.6,933.8 616.7,940.5 620.8,943.4 625.0,945.4 629.1,947.1 633.2,951.2 637.4,948.4 641.2,907.7 645.3,918.1 649.3,922.6 653.6,921.0 658.0,918.1 662.1,922.6 666.3,924.3 670.4,928.1 674.0,931.4 677.9,934.7 682.3,931.9 686.1,933.5 690.2,923.1 694.4,923.6 698.5,926.4 702.6,928.1 706.8,930.2 710.9,917.0 715.0,920.3 719.2,922.3 723.3,919.8 727.4,916.5 731.2,895.0 735.2,894.2 739.0,899.1 743.1,901.6 747.3,905.7 751.4,909.9 755.5,912.7 759.7,913.7 764.3,910.7 767.9,919.0 772.1,923.1 776.2,917.6 780.0,920.6 784.6,929.7 788.2,934.7 792.0,937.1 797.3,922.3 801.1,925.9 805.2,921.4 809.4,900.5 813.3,904.1 817.1,903.8 821.3,908.2 825.4,912.7 829.2,910.4 833.2,912.0 837.5,903.3 841.1,902.8 846.1,907.7 850.2,895.8 854.3,890.0 858.5,895.0 862.3,887.9 866.4,891.7 870.5,895.0 874.7,892.2 878.8,896.2 882.4,901.6 886.6,889.2 890.7,892.5 894.8,894.2 899.0,897.8 903.1,902.4 907.2,907.4 911.4,901.6 915.5,864.4 919.6,840.5 923.8,843.8 927.9,852.0 932.0,861.9 936.2,867.7 940.3,876.0 944.4,885.1 948.6,890.9 952.7,895.0 956.8,884.6 961.0,893.8 965.1,899.1 968.9,897.5 972.5,889.2 976.7,880.1 980.8,884.6 984.9,890.0 989.4,887.6 993.2,893.3 997.3,899.1 1001.4,904.9 1005.6,910.7 1009.7,914.8 1013.8,918.6 1017.6,919.3 1021.8,909.9 1025.9,912.7 1030.0,919.8 1035.0,924.3 1038.6,925.6 1042.9,921.4 1046.5,907.4 1050.7,900.8 1054.8,898.8 1058.9,905.7 1063.1,912.4 1066.7,915.3 1070.5,904.9 1074.6,895.0 1078.8,900.5 1082.9,904.4 1087.4,907.7 1091.5,914.8 1095.6,921.4 1099.8,927.2 1103.9,907.7 1107.7,909.4 1111.8,909.0 1116.0,914.8 1119.8,919.0 1123.9,901.1 1128.0,898.3 1132.0,881.0 1136.1,887.6 1140.4,895.0 1144.4,893.8 1148.5,899.5 1152.6,901.6 1156.9,889.5 1160.9,894.2 1165.0,898.3 1169.2,884.3 1173.0,869.7 1177.1,868.6 1181.2,873.5 1185.7,878.5 1190.0,870.7 1194.0,877.3 1198.1,852.0 1201.9,855.3 1206.0,846.6 1210.2,852.0 1214.3,842.9 1218.1,819.5 1222.1,814.8 1225.9,839.3 1230.0,850.4 1235.0,862.4 1239.1,859.1 1243.2,861.9 1247.0,860.8 1251.2,867.7 1255.1,877.3 1259.3,885.9 1263.1,894.2 1267.2,900.0 1271.3,903.3 1275.0,890.0 1279.6,891.2 1284.5,894.5" fill="none" stroke="#2962ff" stroke-width="1.7" stroke-linejoin="round"/>
<polyline points="13.3,925.6 15.8,910.7 18.3,900.0 24.0,894.2 27.9,885.1 31.5,891.7 35.6,895.0 39.8,899.1 43.9,904.9 47.7,900.0 51.3,895.0 55.5,889.2 59.6,895.8 63.7,898.3 67.5,901.6 72.0,909.0 76.1,915.7 80.7,920.3 84.4,905.7 88.5,910.7 92.6,915.3 96.8,922.6 100.6,928.1 105.0,933.0 109.2,937.1 112.8,939.1 117.1,910.7 121.1,915.3 125.7,920.6 129.8,924.3 134.0,927.6 138.1,921.4 142.2,908.2 145.9,902.4 150.2,900.8 154.1,893.8 157.9,892.2 162.1,900.8 165.7,914.0 170.0,919.0 174.5,923.6 178.9,925.6 183.2,933.0 187.2,938.8 191.5,943.4 195.1,939.1 199.3,942.1 203.1,941.3 207.2,943.8 211.3,948.7 215.8,951.2 219.9,952.9 224.0,948.7 228.2,953.3 232.3,955.3 236.1,956.2 240.2,935.5 244.4,922.3 248.0,912.7 252.1,918.1 256.3,922.3 260.4,924.8 265.4,926.4 267.9,923.9 270.0,914.0 272.9,900.0 276.9,900.0 281.0,905.7 285.2,913.2 289.3,918.6 293.1,921.4 297.2,922.3 301.4,882.6 305.5,887.6 309.6,895.0 313.8,898.8 317.9,893.3 322.0,888.4 326.2,892.2 330.3,894.2 334.4,900.8 338.6,896.7 342.7,875.7 346.5,867.7 350.1,879.0 354.3,881.0 358.4,887.6 362.5,892.5 367.1,896.2 371.6,885.9 375.4,884.6 379.5,890.0 383.7,894.2 387.6,893.8 391.8,898.3 395.6,902.1 399.7,908.2 403.8,913.7 408.0,915.7 412.1,913.7 416.2,918.1 420.4,904.9 424.5,881.8 428.6,878.5 432.8,883.4 436.9,888.4 440.5,891.2 444.3,869.4 448.5,874.3 452.6,885.9 456.7,894.2 461.7,900.8 465.8,920.6 470.0,932.5 473.6,929.2 477.7,934.2 481.5,938.0 485.7,932.2 489.8,935.5 493.9,936.8 498.1,931.4 501.7,910.7 506.3,914.8 510.5,915.7 514.6,919.3 518.7,923.1 522.9,904.1 525.0,893.8 526.6,885.1 530.7,879.0 534.9,885.1 539.0,880.1 542.8,876.0 546.8,882.6 550.6,886.7 554.7,890.9 558.8,895.0 563.3,897.8 567.9,890.5 571.6,894.2 575.9,899.1 579.8,899.1 583.6,890.9 587.8,876.0 591.6,862.4 595.7,868.6 600.2,874.3 604.6,880.1 609.3,883.9 612.9,883.9 616.7,847.1 620.8,845.9 625.0,852.9 629.1,857.8 632.7,854.5 637.0,862.4 641.2,881.0 644.8,896.2 648.9,889.5 653.6,892.5 658.0,896.7 662.1,890.5 666.3,892.5 670.4,881.0 674.0,872.4 677.9,874.0 682.0,879.3 686.1,882.6 690.2,889.2 694.4,890.5 698.5,881.8 702.6,884.3 706.8,880.1 710.9,886.7 715.0,891.7 719.2,890.5 723.3,892.5 727.4,896.2 731.2,902.4 735.2,907.7 739.0,906.6 743.1,908.7 747.3,896.2 751.9,885.1 756.0,887.6 760.2,891.7 764.3,895.8 767.9,889.2 772.1,881.8 776.2,890.5 780.0,894.5 784.1,872.7 788.2,864.8 792.4,872.7 797.3,885.1 801.1,891.7 805.2,898.3 809.4,904.1 813.3,909.0 817.6,913.2 821.3,912.4 825.4,910.7 829.2,913.7 833.2,915.7 837.5,919.0 841.1,921.4 846.1,920.6 850.2,927.2 854.3,929.7 858.5,927.2 862.3,930.2 866.4,925.6 870.5,921.0 874.7,925.6 878.3,927.6 882.4,917.0 886.6,920.3 890.4,922.3 894.8,919.3 899.0,912.7 903.1,912.4 907.2,912.0 911.4,915.7 915.5,925.6 919.6,932.2 923.8,936.8 927.9,940.8 932.0,945.4 936.2,950.0 940.3,952.4 944.4,937.5 948.6,938.8 952.7,934.2 956.8,938.0 960.6,928.6 965.1,932.5 968.9,935.5 972.5,938.5 976.7,942.1 980.8,941.8 984.9,935.2 989.4,936.8 993.2,933.5 997.3,929.7 1001.4,924.8 1003.9,909.0 1005.6,898.3 1009.7,893.8 1013.8,894.2 1017.6,899.5 1021.8,904.9 1025.9,904.1 1029.5,878.0 1032.9,884.3 1035.0,885.9 1038.6,889.2 1042.9,895.0 1046.5,902.1 1050.7,908.2 1054.8,914.3 1058.9,890.9 1062.6,871.9 1066.7,878.5 1070.5,885.1 1074.6,891.7 1078.8,883.9 1082.9,881.8 1087.4,884.3 1091.5,871.9 1095.6,867.4 1099.8,862.8 1103.9,876.3 1107.7,880.1 1111.8,885.1 1116.0,881.0 1119.8,883.4 1123.9,891.7 1128.0,896.7 1132.0,904.9 1136.6,897.5 1140.7,902.4 1144.9,907.4 1148.5,898.3 1152.6,900.0 1156.9,904.1 1160.9,908.7 1165.0,912.7 1169.2,917.6 1173.0,923.1 1176.3,926.4 1181.2,922.6 1185.7,925.6 1190.0,929.7 1194.0,920.6 1198.1,927.2 1201.9,931.9 1206.0,936.3 1210.2,938.5 1214.3,941.8 1218.1,947.9 1222.1,951.2 1225.9,929.7 1230.0,923.1 1235.0,917.0 1239.1,919.3 1243.2,922.3 1247.0,927.6 1251.2,919.0 1255.1,904.1 1259.3,910.4 1263.1,885.1 1267.2,881.8 1271.3,886.7 1275.0,892.5 1279.6,898.3 1284.5,901.1" fill="none" stroke="#ff6d00" stroke-width="1.7" stroke-linejoin="round"/>
</g>
<path d="M1492.5 422H1562.7a3 3 0 0 1 3 3V441.5a3 3 0 0 1 -3 3H1492.5z" fill="#f23645"/>
<path d="M1492.5 482.5H1562.7a3 3 0 0 1 3 3V502.0a3 3 0 0 1 -3 3H1492.5z" fill="#4caf50"/>
<path d="M1492.5 506.2H1577.2a3 3 0 0 1 3 3V544.4a3 3 0 0 1 -3 3H1492.5z" fill="#f23645"/>
<path d="M1492.5 861.5H1572.0a3 3 0 0 1 3 3V881.5a3 3 0 0 1 -3 3H1492.5z" fill="#2962ff"/>
<path d="M1492.5 884.5H1572.0a3 3 0 0 1 3 3V903.8a3 3 0 0 1 -3 3H1492.5z" fill="#f50057"/>
<path d="M1492.5 907H1572.0a3 3 0 0 1 3 3V926.5a3 3 0 0 1 -3 3H1492.5z" fill="#ff6d00"/>
<circle cx="1283.6" cy="771.9" r="13" fill="none" stroke="#b04ec4" stroke-width="2.6"/>
<polygon points="1287.44,765.20 1277.80,772.64 1283.10,773.14 1279.10,779.00 1289.40,771.30 1284.76,770.66" fill="#b04ec4" stroke="#b04ec4" stroke-width="0.9" stroke-linejoin="round"/>
<circle cx="1292.6" cy="762.9" r="5.6" fill="#0f0f0f"/>
<circle cx="1292.6" cy="762.9" r="3.7" fill="#f23645"/>
<path d="M15.4 1039H32.5V1058.8H24V1047.4H15.4z" fill="#dedede"/>
<circle cx="38.2" cy="1042.7" r="3.7" fill="#dedede"/>
<path d="M46.3 1039H55.7L47.9 1058.8H37.7z" fill="#dedede"/>
<g opacity="0.999">
<text x="13.75" y="27.2" fill="#e0e0e0" stroke="#e0e0e0" stroke-width="0.55" text-anchor="start" textLength="121.25" lengthAdjust="spacing">ChartAnalysis_4</text>
<text x="140" y="27.2" fill="#e0e0e0" stroke="#e0e0e0" stroke-width="0.55" text-anchor="start" textLength="55.75" lengthAdjust="spacing">created</text>
<text x="202" y="27.2" fill="#e0e0e0" stroke="#e0e0e0" stroke-width="0.55" text-anchor="start" textLength="30.5" lengthAdjust="spacing">with</text>
<text x="238.25" y="27.2" fill="#e0e0e0" stroke="#e0e0e0" stroke-width="0.55" text-anchor="start" textLength="129.25" lengthAdjust="spacing">TradingView.com,</text>
<text x="374.5" y="27.2" fill="#e0e0e0" stroke="#e0e0e0" stroke-width="0.55" text-anchor="start" textLength="30.5" lengthAdjust="spacing">Aug</text>
<text x="411" y="27.2" fill="#e0e0e0" stroke="#e0e0e0" stroke-width="0.55" text-anchor="start" textLength="23" lengthAdjust="spacing">06,</text>
<text x="442" y="27.2" fill="#e0e0e0" stroke="#e0e0e0" stroke-width="0.55" text-anchor="start" textLength="33" lengthAdjust="spacing">2025</text>
<text x="481.5" y="27.2" fill="#e0e0e0" stroke="#e0e0e0" stroke-width="0.55" text-anchor="start" textLength="43.5" lengthAdjust="spacing">08:43</text>
<text x="531" y="27.2" fill="#e0e0e0" stroke="#e0e0e0" stroke-width="0.55" text-anchor="start" textLength="31" lengthAdjust="spacing">UTC</text>
<text x="24.25" y="62.6" fill="#cbcbcb" stroke="#cbcbcb" stroke-width="0.55" text-anchor="start" textLength="49.0" lengthAdjust="spacing">Solana</text>
<text x="81.62" y="62.6" fill="#cbcbcb" stroke="#cbcbcb" stroke-width="0.55" text-anchor="middle">/</text>
<text x="88.25" y="62.6" fill="#cbcbcb" stroke="#cbcbcb" stroke-width="0.55" text-anchor="start" textLength="27.5" lengthAdjust="spacing">U.S.</text>
<text x="124.25" y="62.6" fill="#cbcbcb" stroke="#cbcbcb" stroke-width="0.55" text-anchor="start" textLength="42.5" lengthAdjust="spacing">Dollar</text>
<text x="173.75" y="62.6" fill="#cbcbcb" stroke="#cbcbcb" stroke-width="0.55" text-anchor="middle">·</text>
<text x="182" y="62.6" fill="#cbcbcb" stroke="#cbcbcb" stroke-width="0.55" text-anchor="start" textLength="18" lengthAdjust="spacing">1D</text>
<text x="206.75" y="62.6" fill="#cbcbcb" stroke="#cbcbcb" stroke-width="0.55" text-anchor="middle">·</text>
<text x="214.25" y="62.6" fill="#cbcbcb" stroke="#cbcbcb" stroke-width="0.55" text-anchor="start" textLength="79.5" lengthAdjust="spacing">COINBASE</text>
<text x="303.4" y="62.6" fill="#cbcbcb" stroke="#cbcbcb" stroke-width="0.55" text-anchor="start" textLength="11.5" lengthAdjust="spacing">O</text>
<text x="316.6" y="62.6" fill="#f23645" stroke="#f23645" stroke-width="0.55" text-anchor="start" textLength="48.1" lengthAdjust="spacing">164.07</text>
<text x="374.9" y="62.6" fill="#cbcbcb" stroke="#cbcbcb" stroke-width="0.55" text-anchor="start" textLength="11" lengthAdjust="spacing">H</text>
<text x="387.3" y="62.6" fill="#f23645" stroke="#f23645" stroke-width="0.55" text-anchor="start" textLength="48.7" lengthAdjust="spacing">164.75</text>
<text x="446.4" y="62.6" fill="#cbcbcb" stroke="#cbcbcb" stroke-width="0.55" text-anchor="start" textLength="7.4" lengthAdjust="spacing">L</text>
<text x="454.8" y="62.6" fill="#f23645" stroke="#f23645" stroke-width="0.55" text-anchor="start" textLength="45.2" lengthAdjust="spacing">161.15</text>
<text x="510.3" y="62.6" fill="#cbcbcb" stroke="#cbcbcb" stroke-width="0.55" text-anchor="start" textLength="10.3" lengthAdjust="spacing">C</text>
<text x="521.6" y="62.6" fill="#f23645" stroke="#f23645" stroke-width="0.55" text-anchor="start" textLength="49.4" lengthAdjust="spacing">163.29</text>
<text x="582" y="62.6" fill="#f23645" stroke="#f23645" stroke-width="0.55" text-anchor="start" textLength="40.4" lengthAdjust="spacing">−0.78</text>
<text x="629.3" y="62.6" fill="#f23645" stroke="#f23645" stroke-width="0.55" text-anchor="start" textLength="68.7" lengthAdjust="spacing">(−0.48%)</text>
<text x="24.25" y="85" fill="#cbcbcb" stroke="#cbcbcb" stroke-width="0.55" text-anchor="start" textLength="83.25" lengthAdjust="spacing">Supertrend</text>
<text x="113.75" y="85" fill="#cbcbcb" stroke="#cbcbcb" stroke-width="0.55" text-anchor="start" textLength="26.25" lengthAdjust="spacing">(10,</text>
<text x="145.75" y="85" fill="#cbcbcb" stroke="#cbcbcb" stroke-width="0.55" text-anchor="start" textLength="13.75" lengthAdjust="spacing">3)</text>
<text x="170" y="85" fill="#cbcbcb" stroke="#cbcbcb" stroke-width="0.55" text-anchor="start" textLength="10.5" lengthAdjust="spacing" font-size="14">∅</text>
<text x="190.5" y="85" fill="#f23645" stroke="#f23645" stroke-width="0.55" text-anchor="start" textLength="49.5" lengthAdjust="spacing">190.55</text>
<text x="24.5" y="816.7" fill="#cbcbcb" stroke="#cbcbcb" stroke-width="0.55" text-anchor="start" textLength="28.8" lengthAdjust="spacing">DMI</text>
<text x="59.3" y="816.7" fill="#cbcbcb" stroke="#cbcbcb" stroke-width="0.55" text-anchor="start" textLength="26.7" lengthAdjust="spacing">(14,</text>
<text x="91" y="816.7" fill="#cbcbcb" stroke="#cbcbcb" stroke-width="0.55" text-anchor="start" textLength="22.3" lengthAdjust="spacing">14)</text>
<text x="124" y="816.7" fill="#f50057" stroke="#f50057" stroke-width="0.55" text-anchor="start" textLength="61.5" lengthAdjust="spacing">22.3624</text>
<text x="196" y="816.7" fill="#2962ff" stroke="#2962ff" stroke-width="0.55" text-anchor="start" textLength="58.8" lengthAdjust="spacing">22.7874</text>
<text x="265.2" y="816.7" fill="#ff6d00" stroke="#ff6d00" stroke-width="0.55" text-anchor="start" textLength="62.5" lengthAdjust="spacing">20.9543</text>
<text x="1503.8" y="780.3" fill="#b4b4b4" stroke="#b4b4b4" stroke-width="0.25" text-anchor="start" textLength="43.7" lengthAdjust="spacing">80.00</text>
<text x="1503.8" y="718.6" fill="#b4b4b4" stroke="#b4b4b4" stroke-width="0.25" text-anchor="start" textLength="53.6" lengthAdjust="spacing">100.00</text>
<text x="1503.8" y="656.9" fill="#b4b4b4" stroke="#b4b4b4" stroke-width="0.25" text-anchor="start" textLength="53.6" lengthAdjust="spacing">120.00</text>
<text x="1503.8" y="595.2" fill="#b4b4b4" stroke="#b4b4b4" stroke-width="0.25" text-anchor="start" textLength="53.6" lengthAdjust="spacing">140.00</text>
<text x="1503.8" y="471.9" fill="#b4b4b4" stroke="#b4b4b4" stroke-width="0.25" text-anchor="start" textLength="53.6" lengthAdjust="spacing">180.00</text>
<text x="1503.8" y="410.2" fill="#b4b4b4" stroke="#b4b4b4" stroke-width="0.25" text-anchor="start" textLength="53.6" lengthAdjust="spacing">200.00</text>
<text x="1503.8" y="348.5" fill="#b4b4b4" stroke="#b4b4b4" stroke-width="0.25" text-anchor="start" textLength="53.6" lengthAdjust="spacing">220.00</text>
<text x="1503.8" y="286.8" fill="#b4b4b4" stroke="#b4b4b4" stroke-width="0.25" text-anchor="start" textLength="53.6" lengthAdjust="spacing">240.00</text>
<text x="1503.8" y="225.1" fill="#b4b4b4" stroke="#b4b4b4" stroke-width="0.25" text-anchor="start" textLength="53.6" lengthAdjust="spacing">260.00</text>
<text x="1503.8" y="163.4" fill="#b4b4b4" stroke="#b4b4b4" stroke-width="0.25" text-anchor="start" textLength="53.6" lengthAdjust="spacing">280.00</text>
<text x="1503.8" y="101.8" fill="#b4b4b4" stroke="#b4b4b4" stroke-width="0.25" text-anchor="start" textLength="53.6" lengthAdjust="spacing">300.00</text>
<text x="1503.8" y="835.1" fill="#b4b4b4" stroke="#b4b4b4" stroke-width="0.25" text-anchor="start" textLength="63.7" lengthAdjust="spacing">40.0000</text>
<g clip-path="url(#cpt)">
<text x="19.0" y="998" fill="#b8b8b8" stroke="#b8b8b8" stroke-width="0.35" text-anchor="middle" textLength="27" lengthAdjust="spacing">Oct</text>
<text x="145.9" y="998" fill="#b8b8b8" stroke="#b8b8b8" stroke-width="0.35" text-anchor="middle" textLength="29.5" lengthAdjust="spacing">Nov</text>
<text x="268.6" y="998" fill="#b8b8b8" stroke="#b8b8b8" stroke-width="0.35" text-anchor="middle" textLength="29.5" lengthAdjust="spacing">Dec</text>
<text x="395.5" y="998" fill="#dcdcdc" stroke="#dcdcdc" stroke-width="0.2" text-anchor="middle" textLength="40" lengthAdjust="spacing" font-weight="bold">2025</text>
<text x="522.4" y="998" fill="#b8b8b8" stroke="#b8b8b8" stroke-width="0.35" text-anchor="middle" textLength="28" lengthAdjust="spacing">Feb</text>
<text x="637.0" y="998" fill="#b8b8b8" stroke="#b8b8b8" stroke-width="0.35" text-anchor="middle" textLength="28" lengthAdjust="spacing">Mar</text>
<text x="763.8" y="998" fill="#b8b8b8" stroke="#b8b8b8" stroke-width="0.35" text-anchor="middle" textLength="27" lengthAdjust="spacing">Apr</text>
<text x="886.6" y="998" fill="#b8b8b8" stroke="#b8b8b8" stroke-width="0.35" text-anchor="middle" textLength="30.5" lengthAdjust="spacing">May</text>
<text x="1013.5" y="998" fill="#b8b8b8" stroke="#b8b8b8" stroke-width="0.35" text-anchor="middle" textLength="27.5" lengthAdjust="spacing">Jun</text>
<text x="1136.3" y="998" fill="#b8b8b8" stroke="#b8b8b8" stroke-width="0.35" text-anchor="middle" textLength="20" lengthAdjust="spacing">Jul</text>
<text x="1263.1" y="998" fill="#b8b8b8" stroke="#b8b8b8" stroke-width="0.35" text-anchor="middle" textLength="30" lengthAdjust="spacing">Aug</text>
<text x="1390.0" y="998" fill="#b8b8b8" stroke="#b8b8b8" stroke-width="0.35" text-anchor="middle" textLength="29.5" lengthAdjust="spacing">Sep</text>
</g>
<text x="1504.5" y="438.7" fill="#fff" stroke="#fff" stroke-width="0.15" text-anchor="start" textLength="53" lengthAdjust="spacing">190.55</text>
<text x="1504.5" y="499.2" fill="#fff" stroke="#fff" stroke-width="0.15" text-anchor="start" textLength="52.5" lengthAdjust="spacing">170.81</text>
<text x="1504.5" y="523" fill="#fff" stroke="#fff" stroke-width="0.15" text-anchor="start" textLength="53" lengthAdjust="spacing">163.29</text>
<text x="1504.5" y="541.2" fill="#fbd0d4" stroke="#fbd0d4" stroke-width="0.15" text-anchor="start" textLength="67.5" lengthAdjust="spacing">15:17:00</text>
<text x="1503.8" y="878.7" fill="#fff" stroke="#fff" stroke-width="0.15" text-anchor="start" textLength="63.7" lengthAdjust="spacing">22.7874</text>
<text x="1503.8" y="901.2" fill="#fff" stroke="#fff" stroke-width="0.15" text-anchor="start" textLength="63.7" lengthAdjust="spacing">22.3624</text>
<text x="1503.8" y="923.7" fill="#fff" stroke="#fff" stroke-width="0.15" text-anchor="start" textLength="63.7" lengthAdjust="spacing">20.9543</text>
<text x="65" y="1058.8" fill="#dedede" stroke="#dedede" stroke-width="0.5" text-anchor="start" textLength="160" lengthAdjust="spacing" font-size="27.6" font-weight="bold">TradingView</text>
</g>
</svg>
</body></html>
